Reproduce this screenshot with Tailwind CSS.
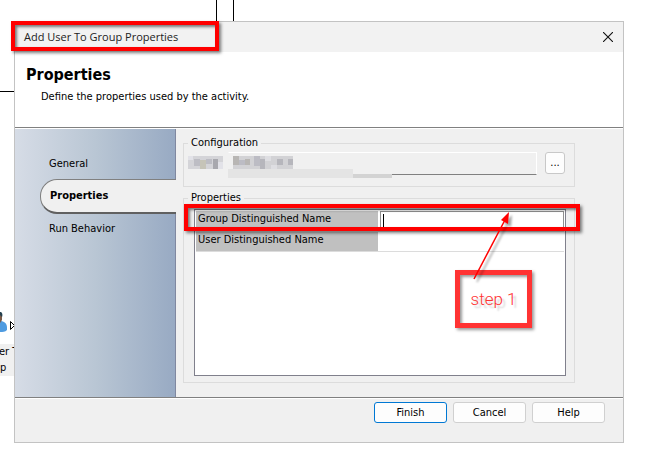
<!DOCTYPE html>
<html lang="en">
<head>
    <meta charset="UTF-8">
    <meta name="viewport" content="width=device-width, initial-scale=1.0">
    <title>Add User To Group Properties</title>
    <script src="https://cdn.jsdelivr.net/npm/@tailwindcss/browser@4"></script>
</head>
<body class="relative min-h-screen overflow-hidden bg-white pt-[21px] pr-[25px] pb-4 pl-[14px] font-['DejaVu_Sans_Condensed','Noto_Sans',sans-serif] text-[11px] leading-4 text-black">
    <!-- Workflow canvas behind the dialog -->
    <div class="absolute top-0 left-[216px] h-6 w-px bg-black"></div>
    <div class="absolute top-0 left-[233px] h-6 w-px bg-black"></div>
    <div class="absolute top-[91px] left-0 h-px w-4 bg-black"></div>
    <svg class="absolute top-[310px] left-0" width="16" height="24" viewBox="0 0 16 24">
        <path d="M0 11C4 11 7 13 7 18V20C5 22 3 22 0 22Z" fill="#4f9be0"/>
        <path d="M0 4H2V10L0 13Z" fill="#7a5a48"/>
        <path d="M0 2C2 2 3 4 2 7L0 5Z" fill="#24404f"/>
        <path d="M10.500 11.500V19.500L14.500 15.500Z" fill="#fff" stroke="#000"/>
    </svg>
    <div class="absolute top-[344px] left-0 flex h-8 flex-col bg-[#f0f0f0] whitespace-nowrap">
        <span class="-ml-px">er T</span>
        <span>p</span>
    </div>

    <!-- Dialog -->
    <div class="relative flex flex-col border border-[#c3c3c3] bg-[#f0f0f0]">
        <div class="relative flex h-[30px] items-center justify-between bg-[#f2f2f2] pr-[10px] pl-[9px]">
            <h1 class="font-['Open_Sans','Noto_Sans',sans-serif] text-[11px] text-[#222]">Add User To Group Properties</h1>
            <button type="button" aria-label="Close">
                <svg width="10" height="10" viewBox="0 0 10 10" fill="none" stroke="#111" stroke-width="1.100"><path d="M0 0L10 10M10 0L0 10"/></svg>
            </button>
            <div class="absolute -top-px -left-1 h-[30px] w-[208px] border-4 border-[#ff0000] shadow-[2px_2px_3px_rgba(0,0,0,0.5),inset_2px_2px_3px_rgba(0,0,0,0.5)]"></div>
        </div>

        <div class="h-[76px] border-b border-[#808080] bg-white pt-[13px] pl-[11px]">
            <h2 class="text-[16px] leading-5 font-bold">Properties</h2>
            <p class="mt-1 pl-[15px]">Define the properties used by the activity.</p>
        </div>

        <div class="flex border-t border-b border-t-white border-b-[#808080]">
            <nav class="w-[161px] shrink-0 border-r border-[#8088a0] bg-linear-to-r from-[#d6dce6] via-[#b9c6d4] to-[#98aac3] pt-[27px]">
                <a href="#" class="block pl-[34px]">General</a>
                <a href="#" class="-mr-px mt-[7px] ml-[25px] flex h-[35px] items-center rounded-l-[17px] border border-r-0 border-b-2 border-[#808080] border-b-[#606060] bg-[#f0f0f0] pl-[9px] font-bold">Properties</a>
                <a href="#" class="mt-[7px] block pl-[34px]">Run Behavior</a>
            </nav>

            <div class="min-w-0 flex-1 pt-[6px] pr-12 pb-[14px] pl-[7px]">
                <fieldset class="h-[52px] border border-[#dcdcdc] pr-[9px] pl-1">
                    <legend class="px-[3px]">Configuration</legend>
                    <div class="mt-px flex items-start gap-1">
                        <svg class="mt-1 shrink-0" width="36" height="13" viewBox="0 0 36 13" aria-hidden="true">
                            <path d="M0 0H35V13H0Z" fill="#d4d4d8"/>
                            <path d="M0 0H5V4H0ZM30 6H35V13H30Z" fill="#e2e2e8"/>
                            <path d="M6 3H12V10H6ZM18 3H24V8H18Z" fill="#bdbdc4"/>
                            <path d="M12 4H18V13H12Z" fill="#c6c4b8"/>
                            <path d="M25 3H30V13H25Z" fill="#a8a8ae"/>
                        </svg>
                        <div class="relative h-[23px] flex-1 border border-t-white border-r-white border-b-[#808080] border-l-[#f0f0f0]">
                            <input type="text" readonly aria-label="Name" class="block h-full w-full bg-transparent outline-none">
                            <svg class="absolute top-[3px] -left-px" width="164" height="22" viewBox="0 0 164 22" aria-hidden="true">
                                <path d="M0 13H125V22H0Z" fill="#e4e4e4"/>
                                <path d="M125 13H164V18H125Z" fill="#f0f0f0"/>
                                <path d="M125 18H164V22H125Z" fill="#d3d3d3"/>
                                <path d="M5 0H65V13H5Z" fill="#d2d2d5"/>
                                <path d="M5 0H11V9H5ZM17 3H22V9H17Z" fill="#b8b6b4"/>
                                <path d="M11 4H17V9H11ZM26 0H32V10H26Z" fill="#bcbcc4"/>
                                <path d="M32 3H37V13H32ZM49 3H55V9H49ZM60 3H65V9H60Z" fill="#b6b6bc"/>
                                <path d="M37 0H43V5H37ZM43 9H49V13H43Z" fill="#dedee2"/>
                            </svg>
                        </div>
                        <button type="button" class="ml-1 h-[22px] w-5 rounded-[3px] border border-[#c8c8c8] bg-[#fdfdfd]">...</button>
                    </div>
                </fieldset>

                <fieldset class="mt-[3px] border border-[#dcdcdc] pr-2 pb-[6px] pl-[10px]">
                    <legend class="-ml-[6px] px-[3px]">Properties</legend>
                    <div class="mt-[3px] h-[167px] border border-[#80808c] bg-white p-px">
                        <table class="w-full border-collapse">
                            <tr class="h-5 border-b border-[#dcdcdc]">
                                <th class="w-[182px] bg-[#c0c0c0] pl-[2px] text-left align-top font-normal"><label for="group">Group Distinguished Name</label></th>
                                <td class="pl-[2px]"><input id="group" type="text" class="block h-[19px] w-full border border-b-0 border-[#909090] pl-[2px] outline-none"></td>
                            </tr>
                            <tr class="h-5 border-b border-[#dcdcdc]">
                                <th class="bg-[#c0c0c0] pl-[2px] text-left align-top font-normal"><label for="user">User Distinguished Name</label></th>
                                <td class="pl-[2px]"><input id="user" type="text" class="block h-[18px] w-full outline-none"></td>
                            </tr>
                        </table>
                    </div>
                </fieldset>
            </div>
        </div>

        <div class="flex justify-end gap-[6px] border-t border-white pt-[3px] pr-[18px] pb-[19px]">
            <button type="button" class="h-[21px] w-[73px] rounded-[3px] border border-[#0078d4] bg-[#fdfdfd]">Finish</button>
            <button type="button" class="h-[21px] w-[73px] rounded-[3px] border border-[#d0d0d0] bg-[#fdfdfd]">Cancel</button>
            <button type="button" class="h-[21px] w-[73px] rounded-[3px] border border-[#d0d0d0] bg-[#fdfdfd]">Help</button>
        </div>
    </div>

    <!-- Callouts -->
    <div class="absolute top-[214px] left-[383px] h-[14px] w-px bg-black"></div>
    <div class="absolute top-[204px] right-[69px] left-[184px] h-[27px] border-4 border-[#ff0000] shadow-[2px_2px_3px_rgba(0,0,0,0.5),inset_2px_2px_3px_rgba(0,0,0,0.5)]"></div>
    <div class="absolute top-[270px] right-[117px] flex h-[58px] w-[77px] items-center justify-center border-5 border-[#ff3333] font-['Roboto',sans-serif] text-[17px] font-light text-[#ff3333] shadow-[2px_2px_3px_rgba(0,0,0,0.4),inset_2px_2px_3px_rgba(0,0,0,0.4)] text-shadow-[3px_3px_2px_rgba(0,0,0,0.2)]">step 1</div>
    <svg class="absolute top-[208px] right-[128px] drop-shadow-[3px_3px_1px_rgba(0,0,0,0.35)]" width="50" height="76" viewBox="0 0 50 76">
        <path d="M3 71L35 10" stroke="#ff0000" stroke-width="1.500"/>
        <path d="M38 4L30 12L37 16Z" fill="#ff0000"/>
    </svg>
</body>
</html>
